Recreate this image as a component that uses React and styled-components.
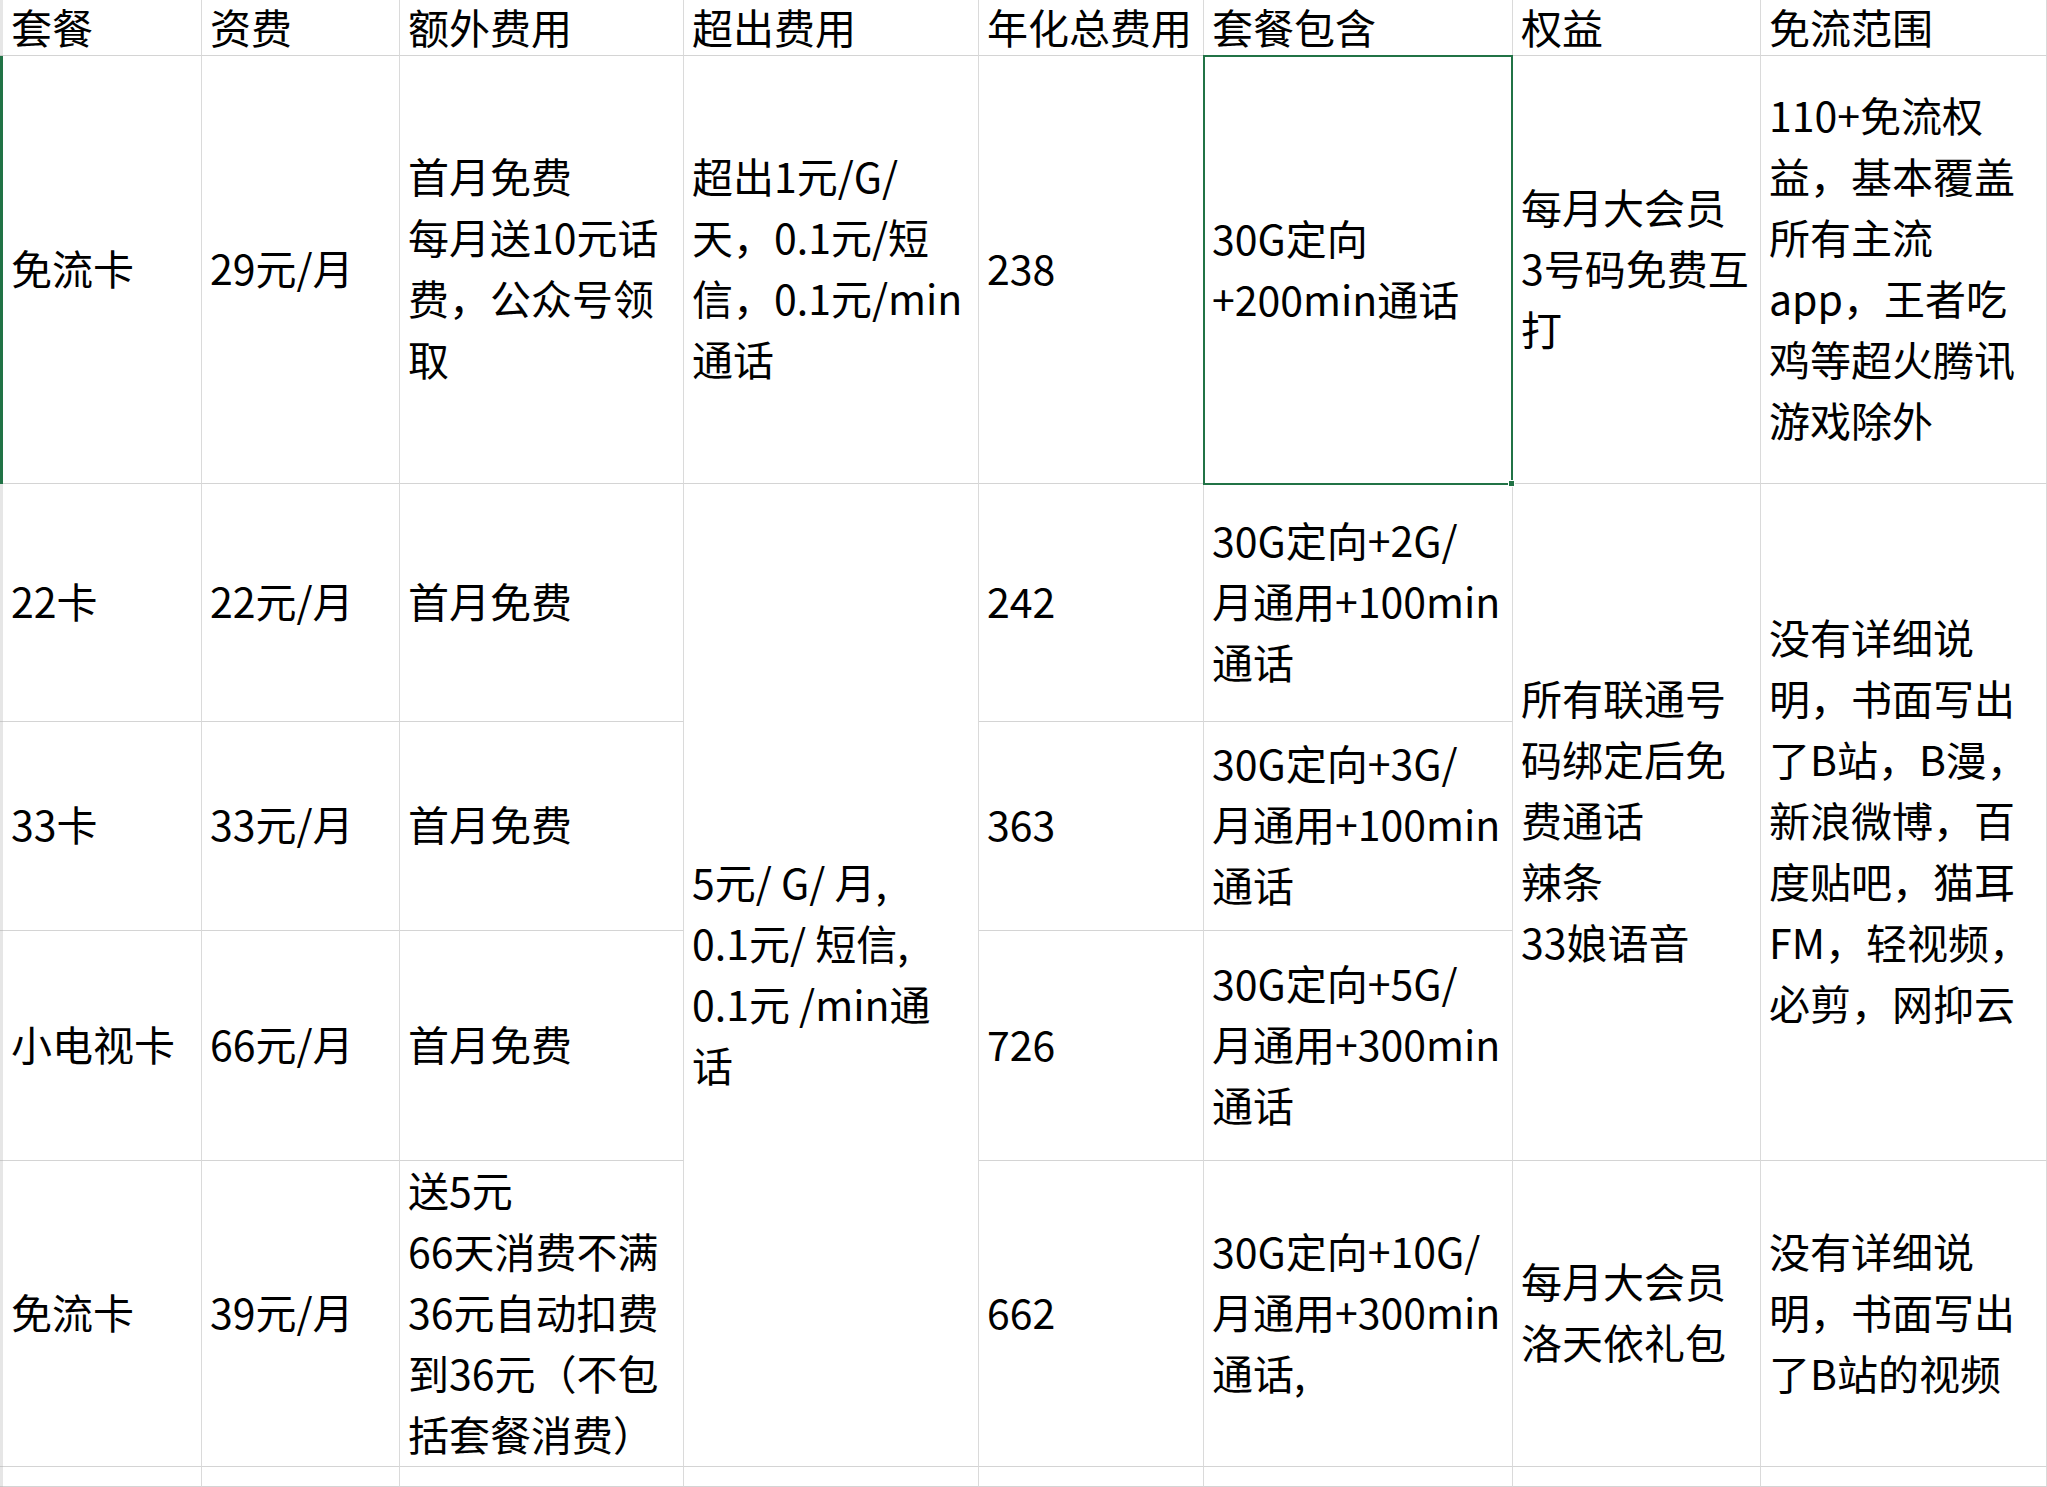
import React from 'react';
import styled, { createGlobalStyle } from 'styled-components';

const GlobalStyle = createGlobalStyle`
    html, body {
        margin: 0;
        padding: 0;
        background: #ffffff;
        overflow: hidden;
    }
    body {
        font-family: "Noto Sans CJK SC", "Noto Sans", sans-serif;
        color: #000000;
    }
`;

const Sheet = styled.div`
    display: grid;
    grid-template-columns: 3px 199px 198px 284px 295px 225px 309px 248px 286px;
    grid-template-rows: 56px 428px 238px 209px 230px 306px 20px;
    width: 2047px;
    height: 1487px;
    overflow: hidden;
`;

const RowHead = styled.div`
    background: ${({ $active }) => ($active ? '#217346' : '#e6e6e6')};
    border-bottom: 1px solid ${({ $active }) => ($active ? '#217346' : '#c8c8c8')};
    box-sizing: border-box;
`;

const Cell = styled.div`
    position: relative;
    grid-row: ${({ $span }) => ($span ? `span ${$span}` : 'auto')};
    box-sizing: border-box;
    border-right: 1px solid #dadada;
    border-bottom: 1px solid #d4d4d4;
    padding: 0 6px 5px 8px;
    display: flex;
    flex-direction: column;
    justify-content: center;
    font-size: 41px;
    line-height: 61px;
    white-space: nowrap;
    ${({ $selected }) =>
        $selected &&
        `
        border: 2px solid #217346;
        margin: -1px 0 -1px -1px;
        padding-left: 7px;
        z-index: 1;
    `}
`;

const HeadCell = styled(Cell)`
    line-height: 50px;
    padding-bottom: 4px;
`;

const Line = styled.span`
    display: block;
`;

const Handle = styled.span`
    position: absolute;
    right: -4px;
    bottom: -4px;
    width: 7px;
    height: 7px;
    background: #217346;
    border: 1px solid #ffffff;
    box-sizing: border-box;
`;

const header = ['套餐', '资费', '额外费用', '超出费用', '年化总费用', '套餐包含', '权益', '免流范围'];

// each row: array of [lines, rowSpan, selected]
const rows = [
    [
        [['免流卡']],
        [['29元/月']],
        [['首月免费', '每月送10元话', '费，公众号领', '取']],
        [['超出1元/G/', '天，0.1元/短', '信，0.1元/min', '通话']],
        [['238']],
        [['30G定向', '+200min通话'], 1, true],
        [['每月大会员', '3号码免费互', '打']],
        [['110+免流权', '益，基本覆盖', '所有主流', 'app，王者吃', '鸡等超火腾讯', '游戏除外']],
    ],
    [
        [['22卡']],
        [['22元/月']],
        [['首月免费']],
        [['5元/ G/ 月,', '0.1元/ 短信,', '0.1元 /min通', '话'], 4],
        [['242']],
        [['30G定向+2G/', '月通用+100min', '通话']],
        [['所有联通号', '码绑定后免', '费通话', '辣条', '33娘语音'], 3],
        [['没有详细说', '明，书面写出', '了B站，B漫，', '新浪微博，百', '度贴吧，猫耳', 'FM，轻视频，', '必剪，网抑云'], 3],
    ],
    [
        [['33卡']],
        [['33元/月']],
        [['首月免费']],
        [['363']],
        [['30G定向+3G/', '月通用+100min', '通话']],
    ],
    [
        [['小电视卡']],
        [['66元/月']],
        [['首月免费']],
        [['726']],
        [['30G定向+5G/', '月通用+300min', '通话']],
    ],
    [
        [['免流卡']],
        [['39元/月']],
        [['送5元', '66天消费不满', '36元自动扣费', '到36元（不包', '括套餐消费）']],
        [['662']],
        [['30G定向+10G/', '月通用+300min', '通话,']],
        [['每月大会员', '洛天依礼包']],
        [['没有详细说', '明，书面写出', '了B站的视频']],
    ],
    Array.from({ length: 8 }, () => [[]]),
];

export default function App() {
    return (
        <>
            <GlobalStyle />
            <Sheet>
                <RowHead />
                {header.map((h) => (
                    <HeadCell key={h}>
                        <Line>{h}</Line>
                    </HeadCell>
                ))}
                {rows.map((row, r) => (
                    <React.Fragment key={r}>
                        <RowHead $active={r === 0} />
                        {row.map(([lines, span, selected], c) => (
                            <Cell key={c} $span={span} $selected={selected}>
                                {lines.map((l, i) => (
                                    <Line key={i}>{l}</Line>
                                ))}
                                {selected && <Handle />}
                            </Cell>
                        ))}
                    </React.Fragment>
                ))}
            </Sheet>
        </>
    );
}
